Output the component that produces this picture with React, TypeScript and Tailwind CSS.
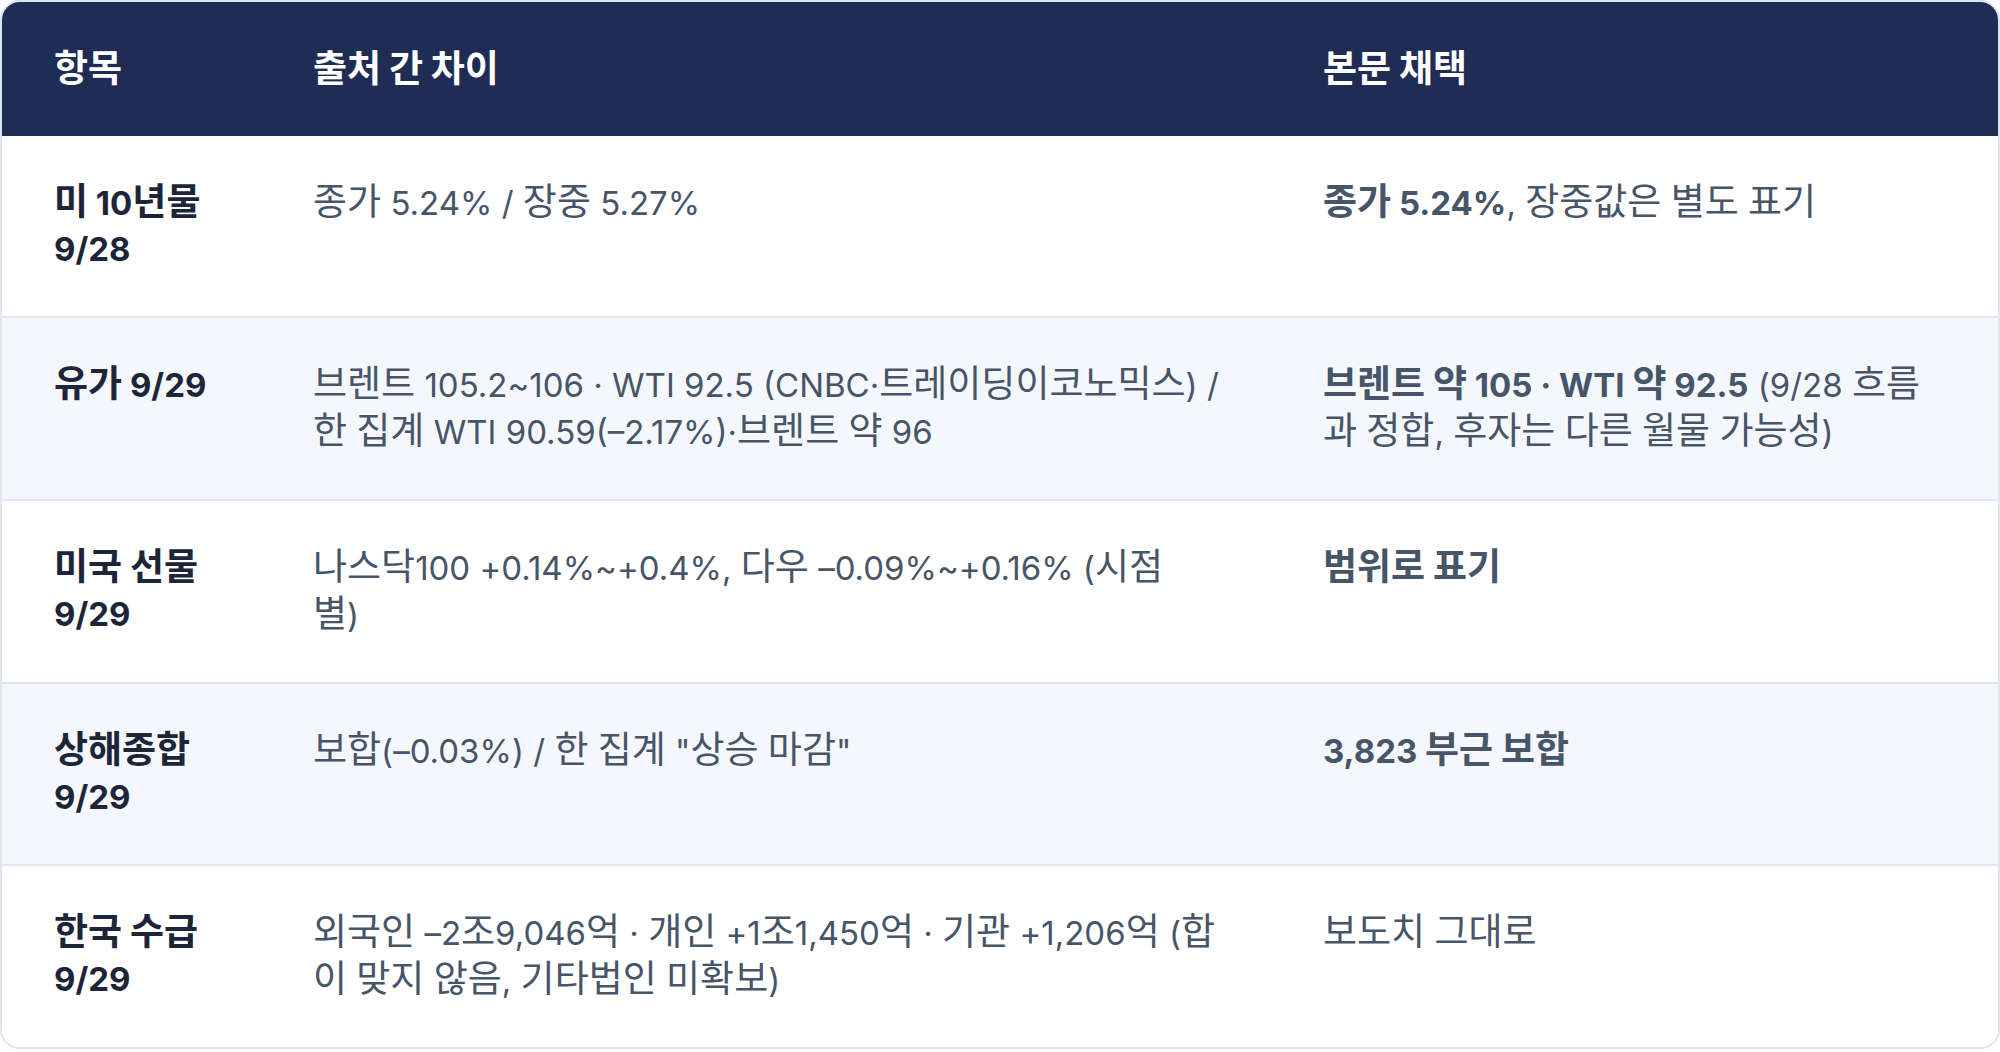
import type { ReactNode } from "react";

// Hangul runs are drawn a bit larger than Latin, as in the reference font
function K({ text }: { text: string }) {
  const parts = text.split(/([\uAC00-\uD7A3\u3131-\u318E]+)/);
  return (
    <>
      {parts.map((p, i) =>
        i % 2 === 1 ? (
          <span key={i} className="text-[37px]">
            {p}
          </span>
        ) : (
          p
        )
      )}
    </>
  );
}

type Seg = { t: string; b?: boolean };

type Row = {
  item: string[];
  diff: string[];
  pick: Seg[];
};

const rows: Row[] = [
  {
    item: ["미 10년물", "9/28"],
    diff: ["종가 5.24% / 장중 5.27%"],
    pick: [{ t: "종가 5.24%", b: true }, { t: ", 장중값은 별도 표기" }],
  },
  {
    item: ["유가 9/29"],
    diff: ["브렌트 105.2~106 · WTI 92.5 (CNBC·트레이딩이코노믹스) / 한 집계 WTI 90.59(–2.17%)·브렌트 약 96"],
    pick: [
      { t: "브렌트 약 105 · WTI 약 92.5", b: true },
      { t: " (9/28 흐름과 정합, 후자는 다른 월물 가능성)" },
    ],
  },
  {
    item: ["미국 선물", "9/29"],
    diff: ["나스닥100 +0.14%~+0.4%, 다우 –0.09%~+0.16% (시점", "별)"],
    pick: [{ t: "범위로 표기", b: true }],
  },
  {
    item: ["상해종합", "9/29"],
    diff: ['보합(–0.03%) / 한 집계 "상승 마감"'],
    pick: [{ t: "3,823 부근 보합", b: true }],
  },
  {
    item: ["한국 수급", "9/29"],
    diff: ["외국인 –2조9,046억 · 개인 +1조1,450억 · 기관 +1,206억 (합이 맞지 않음, 기타법인 미확보)"],
    pick: [{ t: "보도치 그대로" }],
  },
];

function Lines({ lines }: { lines: string[] }) {
  const out: ReactNode[] = [];
  lines.forEach((l, i) => {
    if (i > 0) out.push(<br key={"br" + i} />);
    out.push(<K key={i} text={l} />);
  });
  return <>{out}</>;
}

export default function App() {
  return (
    <div
      className="w-[2000px] h-[1052px] bg-white"
      style={{ fontFamily: 'Inter, "Noto Sans CJK KR", sans-serif' }}
    >
      <div className="w-full overflow-hidden rounded-[20px] border-2 border-[#dfe5f0]">
        <table className="w-full table-fixed border-collapse text-[33px] leading-[46px]">
          <colgroup>
            <col className="w-[259px]" />
            <col className="w-[1010px]" />
            <col />
          </colgroup>
          <thead>
            <tr className="bg-[#1f2c54] text-white">
              <th className="h-[134px] pl-[52px] text-left font-bold">
                <K text="항목" />
              </th>
              <th className="pl-[52px] text-left font-bold">
                <K text="출처 간 차이" />
              </th>
              <th className="pl-[52px] text-left font-bold">
                <K text="본문 채택" />
              </th>
            </tr>
          </thead>
          <tbody>
            {rows.map((r, i) => (
              <tr
                key={i}
                className={
                  (i % 2 === 1 ? "bg-[#f4f7fc]" : "bg-white") +
                  (i > 0 ? " border-t-2 border-[#e1e7f1]" : "")
                }
              >
                <td className="align-top pt-[43px] pb-[44px] pl-[52px] pr-[20px] font-bold text-[#1c2638]">
                  <Lines lines={r.item} />
                </td>
                <td className="align-top pt-[43px] pb-[44px] pl-[52px] pr-[52px] text-[#475569]">
                  <Lines lines={r.diff} />
                </td>
                <td className="align-top pt-[43px] pb-[44px] pl-[52px] pr-[52px] text-[#475569]">
                  {r.pick.map((s, j) =>
                    s.b ? (
                      <b key={j} className="font-bold">
                        <K text={s.t} />
                      </b>
                    ) : (
                      <K key={j} text={s.t} />
                    )
                  )}
                </td>
              </tr>
            ))}
          </tbody>
        </table>
      </div>
    </div>
  );
}
